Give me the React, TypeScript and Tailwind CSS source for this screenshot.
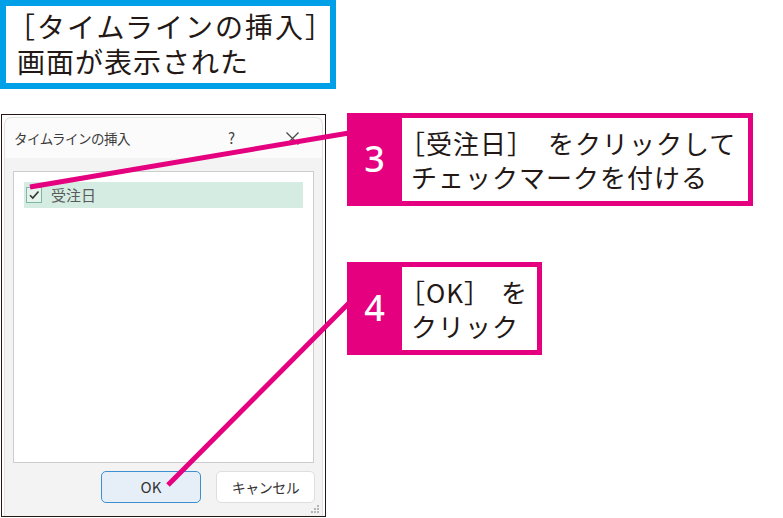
import React from "react";

const JP = { fontFamily: '"Noto Sans CJK JP", "Noto Sans", sans-serif' };

function Callout({ num, lines, width }: { num: string; lines: React.ReactNode[]; width: string }) {
  return (
    <div className={`flex h-[93px] bg-[#e4007f] p-[5px] pl-0 ${width}`}>
      <div className="flex w-[55px] items-center justify-center pb-[2px] text-[36px] font-medium text-white" style={{ fontFamily: '"Noto Sans", sans-serif' }}>
        {num}
      </div>
      <div className="flex flex-1 flex-col justify-center bg-white pl-[9px] text-[26px] leading-[34px] tracking-[1px] text-[#231815]">
        {lines.map((l, i) => (
          <div key={i} className="whitespace-nowrap">{l}</div>
        ))}
      </div>
    </div>
  );
}

function Dialog() {
  return (
    <div className="ml-px mt-[25px] h-[403px] w-[325px] border-[1.5px] border-[#231815] bg-white pt-[2px] pl-[2px] pr-[2px]">
      <div className="flex h-full flex-col rounded-t-[7px] border border-b-0 border-[#e2e2e2] bg-[#f3f3f3]">
        <div className="flex h-[40px] items-center rounded-t-[7px] bg-[#fbfbfb] pl-[9px] text-[13.5px] text-[#3a3a3a]">
          <span className="tracking-[-0.5px]">タイムラインの挿入</span>
          <span className="ml-[98px] text-[15px] text-[#444]">?</span>
          <svg className="ml-[50px]" width="15" height="15" viewBox="0 0 15 15">
            <path d="M1.5 1.5 L13.5 13.5 M13.5 1.5 L1.5 13.5" stroke="#4a4a4a" strokeWidth="1.3" />
          </svg>
        </div>
        <div className="mx-[8px] mt-[13px] h-[292px] border border-[#cdcdcd] bg-white px-[10px] pt-[10px]">
          <div className="flex h-[26px] items-center bg-[#d5ece2] pl-[2px]">
            <div className="flex h-[16px] w-[16px] items-center justify-center border border-[#7fb8a0] bg-[#e6f3ed]">
              <svg width="12" height="12" viewBox="0 0 12 12">
                <path d="M2 6.2 L4.8 9 L10.5 2.5" fill="none" stroke="#333" strokeWidth="1.6" />
              </svg>
            </div>
            <span className="ml-[9px] text-[15px] text-[#5a5a5a]">受注日</span>
          </div>
        </div>
        <div className="relative mt-[8px] flex flex-1 gap-[15px] pl-[96px]">
          <div className="flex h-[32px] w-[100px] items-center justify-center rounded-[5px] border border-[#3d8fd0] bg-[#e6eff8] text-[15px] text-[#333]">
            OK
          </div>
          <div className="flex h-[32px] w-[99px] items-center justify-center rounded-[5px] border border-[#dedede] bg-white text-[14px] tracking-[-0.5px] text-[#333]">
            キャンセル
          </div>
          <svg className="absolute right-[2px] bottom-[2px]" width="10" height="10" viewBox="0 0 10 10">
            <g fill="#b5b5b5">
              <rect x="7" y="1" width="2" height="2" />
              <rect x="4" y="4" width="2" height="2" />
              <rect x="7" y="4" width="2" height="2" />
              <rect x="1" y="7" width="2" height="2" />
              <rect x="4" y="7" width="2" height="2" />
              <rect x="7" y="7" width="2" height="2" />
            </g>
          </svg>
        </div>
      </div>
    </div>
  );
}

export default function App() {
  return (
    <div className="relative flex h-[518px] w-[783px] overflow-hidden bg-white" style={JP}>
      <div className="w-[336px]">
        <div className="h-[89px] w-[336px] border-[6px] border-[#00a0e9] pl-[11px] pt-[3px] text-[28px] leading-[35px] tracking-[1px] text-[#231815]">
          <div className="whitespace-nowrap tracking-[2px]">
            <span className="-ml-[10px]">［</span>タイムラインの挿入］
          </div>
          <div className="whitespace-nowrap">画面が表示された</div>
        </div>
        <Dialog />
      </div>
      <div className="pl-[11px] pt-[113px]">
        <Callout
          num="3"
          lines={[
            <>
              <span className="-ml-[12px]">［</span>受注日］<span className="inline-block w-[14px]" />をクリックして
            </>,
            "チェックマークを付ける",
          ]}
          width="w-[406px]"
        />
        <div className="mt-[56px]">
          <Callout
            num="4"
            lines={[
              <>
                <span className="-ml-[12px]">［</span>OK］<span className="inline-block w-[10px]" />を
              </>,
              "クリック",
            ]}
            width="w-[195px]"
          />
        </div>
      </div>
      <svg className="pointer-events-none absolute left-0 top-0" width="783" height="518">
        <line x1="30" y1="187" x2="349" y2="133" stroke="#e4007f" strokeWidth="5" />
        <line x1="168" y1="485" x2="349" y2="303" stroke="#e4007f" strokeWidth="5" />
      </svg>
    </div>
  );
}
